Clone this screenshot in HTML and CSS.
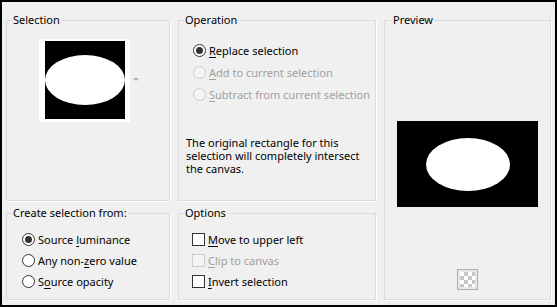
FILE: index.html
```html
<!DOCTYPE html>
<html lang="en">
<head>
  <meta charset="UTF-8" />
  <title>Load Selection From Alpha</title>
  <link rel="stylesheet" href="styles.css">
</head>
<body>
  <div class="dialog">
    <!-- Selection thumbnail -->
    <fieldset class="group sel">
      <legend>Selection</legend>
      <div class="thumb-row">
        <svg class="thumb" width="91" height="83" viewBox="0 0 91 83">
          <rect x="0" y="0" width="91" height="83" fill="#fff"/>
          <rect x="6" y="2" width="80" height="78" fill="#000"/>
          <ellipse cx="46" cy="41" rx="40" ry="25" fill="#fff"/>
        </svg>
        <span class="drop-arrow"></span>
      </div>
    </fieldset>

    <!-- Operation -->
    <fieldset class="group op">
      <legend>Operation</legend>
      <div class="list op-list">
        <label class="radio checked"><span class="mark"></span><span><u>R</u>eplace selection</span></label>
        <label class="radio disabled"><span class="mark"></span><span><u>A</u>dd to current selection</span></label>
        <label class="radio disabled"><span class="mark"></span><span><u>S</u>ubtract from current selection</span></label>
      </div>
      <p class="note">The original rectangle for this<br>selection will completely intersect<br>the canvas.</p>
    </fieldset>

    <!-- Preview -->
    <fieldset class="group preview">
      <legend>Preview</legend>
      <svg class="preview-img" width="141" height="86" viewBox="0 0 141 86">
        <rect x="0" y="0" width="141" height="86" fill="#000"/>
        <ellipse cx="71" cy="43.5" rx="42" ry="26.5" fill="#fff"/>
      </svg>
      <button class="checker-btn" title="Transparency"></button>
    </fieldset>

    <!-- Create selection from -->
    <fieldset class="group create">
      <legend>Create selection from:</legend>
      <div class="list small-list">
        <label class="radio checked"><span class="mark"></span><span>Source <u>l</u>uminance</span></label>
        <label class="radio"><span class="mark"></span><span>Any non-<u>z</u>ero value</span></label>
        <label class="radio"><span class="mark"></span><span>S<u>o</u>urce opacity</span></label>
      </div>
    </fieldset>

    <!-- Options -->
    <fieldset class="group options">
      <legend>Options</legend>
      <div class="list small-list">
        <label class="check"><span class="mark"></span><span><u>M</u>ove to upper left</span></label>
        <label class="check disabled"><span class="mark"></span><span><u>C</u>lip to canvas</span></label>
        <label class="check"><span class="mark"></span><span><u>I</u>nvert selection</span></label>
      </div>
    </fieldset>
  </div>
</body>
</html>
```

FILE: styles.css
```css
body, html {
  margin: 0;
  padding: 0;
  background: #f0f0f0;
  font-family: 'Noto Sans', 'Open Sans', sans-serif;
  font-size: 11px;
  color: #000;
}

.dialog {
  box-sizing: border-box;
  width: 557px;
  height: 307px;
  border: 2px solid #000;
  background: #f0f0f0;
  padding: 10px 0 5px 4px;
  display: grid;
  grid-template-columns: 164px 198px 167px;
  grid-template-rows: 189px 95px;
  gap: 4px 8px;
}

.group {
  box-sizing: border-box;
  margin: 0;
  padding: 0;
  min-width: 0;
  border: 1px solid #dcdcdc;
  box-shadow: 1px 1px 0 #fff;
}

.group legend {
  margin-left: 5px;
  padding: 0 1px;
  line-height: 16px;
}

.preview {
  grid-column: 3;
  grid-row: 1 / span 2;
  display: flex;
  flex-direction: column;
  align-items: center;
}

.preview legend {
  margin-left: 7px;
}

.sel { grid-column: 1; grid-row: 1; }
.op { grid-column: 2; grid-row: 1; }
.create { grid-column: 1; grid-row: 2; }
.options { grid-column: 2; grid-row: 2; }

/* selection thumbnail */
.thumb-row {
  display: flex;
  align-items: center;
  margin: 11px 0 0 32px;
}

.thumb {
  display: block;
}

.drop-arrow {
  margin-left: 3px;
  width: 0;
  height: 0;
  border-left: 3px solid transparent;
  border-right: 3px solid transparent;
  border-top: 3px solid #b0b0b0;
  margin-top: -2px;
}

/* radio / check lists */
.list {
  display: flex;
  flex-direction: column;
}

.op-list {
  margin: 11px 0 0 14px;
}

.op-list label {
  height: 22px;
}

.small-list {
  margin: 8px 0 0 15px;
}

.options .small-list {
  margin-left: 13px;
}

.small-list label {
  height: 21px;
}

.radio, .check {
  display: flex;
  align-items: center;
  gap: 3px;
  white-space: nowrap;
}

.radio u, .check u {
  text-underline-offset: 2px;
}

.mark {
  box-sizing: border-box;
  width: 13px;
  height: 13px;
  flex: none;
  background: #fff;
  border: 1px solid #333;
  position: relative;
}

.radio .mark {
  border-radius: 50%;
}

.radio.checked .mark::after {
  content: "";
  position: absolute;
  left: 2px;
  top: 2px;
  width: 7px;
  height: 7px;
  border-radius: 50%;
  background: #333;
}

.disabled {
  color: #a0a0a0;
}

.disabled .mark {
  border-color: #cccccc;
  background: #f4f4f4;
}

.note {
  margin: 31px 0 0 7px;
  line-height: 13px;
  white-space: nowrap;
}

/* preview */
.preview-img {
  display: block;
  margin-top: 93px;
}

.checker-btn {
  margin-top: 62px;
  width: 21px;
  height: 21px;
  padding: 0;
  border: 1px solid #adadad;
  background-color: #fff;
  background-image:
    linear-gradient(45deg, #c6c6c6 25%, transparent 25%, transparent 75%, #c6c6c6 75%),
    linear-gradient(45deg, #c6c6c6 25%, transparent 25%, transparent 75%, #c6c6c6 75%);
  background-size: 8px 8px;
  background-position: 2px 2px, 6px 6px;
  background-clip: content-box;
  box-shadow: inset 0 0 0 2px #e8e8e8;
}
```
